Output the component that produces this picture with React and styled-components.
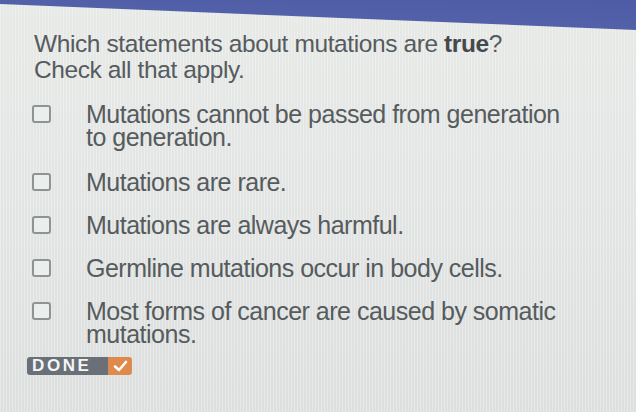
import React from "react";
import styled, { createGlobalStyle } from "styled-components";

const Global = createGlobalStyle`
  html, body {
    margin: 0;
    padding: 0;
  }
  body {
    width: 636px;
    height: 412px;
    overflow: hidden;
    font-family: "Liberation Sans", Arial, sans-serif;
  }
`;

const options = [
  "Mutations cannot be passed from generation to generation.",
  "Mutations are rare.",
  "Mutations are always harmful.",
  "Germline mutations occur in body cells.",
  "Most forms of cancer are caused by somatic mutations.",
];

const S = {
  Page: styled.div`
    position: relative;
    width: 636px;
    height: 412px;
    box-sizing: border-box;
    padding: 31px 0 0 32px;
    background-color: #e1e4e2;
    background-image: repeating-linear-gradient(
        90deg,
        rgba(255, 255, 255, 0.3) 0 1px,
        transparent 1px 3px
      ),
      linear-gradient(180deg, #e7e9e7 0%, #e1e4e2 60%, #dcdfdd 100%);
    color: #565b5e;
  `,
  TopBar: styled.div`
    position: absolute;
    top: 0;
    left: 0;
    width: 100%;
    height: 32px;
    clip-path: polygon(0 0, 100% 0, 100% 30px, 0 4px);
    background: linear-gradient(
      182deg,
      #4d5ca6 0%,
      #5261a8 55%,
      #5d6c8e 78%,
      #737f7c 100%
    );
  `,
  Title: styled.div`
    margin: 0 0 21px 2px;
    font-size: 24.5px;
    line-height: 25.5px;
    letter-spacing: -0.4px;
    b {
      font-weight: bold;
      color: #45494c;
    }
  `,
  List: styled.div`
    display: flex;
    flex-direction: column;
    gap: 20px;
  `,
  Row: styled.div`
    display: flex;
    align-items: flex-start;
    gap: 35px;
    &:first-child {
      margin-bottom: 2px;
    }
  `,
  Box: styled.div`
    flex: none;
    width: 15px;
    height: 14px;
    margin-top: 2px;
    border: 2px solid #8e9394;
    border-radius: 3px;
    background: #eceeed;
  `,
  Label: styled.div`
    width: 480px;
    font-size: 25px;
    line-height: 23px;
    letter-spacing: -0.5px;
  `,
  Done: styled.div`
    display: flex;
    margin: 11px 0 0 -5px;
    width: 105px;
    height: 18px;
    border-radius: 3px;
    overflow: hidden;
  `,
  DoneText: styled.div`
    flex: 1;
    display: flex;
    align-items: center;
    padding-left: 5px;
    background: #697077;
    color: #f4f5f5;
    font-weight: bold;
    font-size: 17px;
    letter-spacing: 2.6px;
  `,
  DoneCheck: styled.div`
    width: 24px;
    display: flex;
    align-items: center;
    justify-content: center;
    background: #df8a4d;
  `,
};

const App = () => (
  <S.Page>
    <Global />
    <S.TopBar />
    <S.Title>
      Which statements about mutations are <b>true</b>?
      <br />
      Check all that apply.
    </S.Title>
    <S.List>
      {options.map((text) => (
        <S.Row key={text}>
          <S.Box />
          <S.Label>{text}</S.Label>
        </S.Row>
      ))}
    </S.List>
    <S.Done>
      <S.DoneText>DONE</S.DoneText>
      <S.DoneCheck>
        <svg width="15" height="12" viewBox="0 0 15 12">
          <path
            d="M2 6.5 L6 10 L13 2"
            fill="none"
            stroke="#fff"
            strokeWidth="2.6"
            strokeLinecap="round"
            strokeLinejoin="round"
          />
        </svg>
      </S.DoneCheck>
    </S.Done>
  </S.Page>
);

export default App;
